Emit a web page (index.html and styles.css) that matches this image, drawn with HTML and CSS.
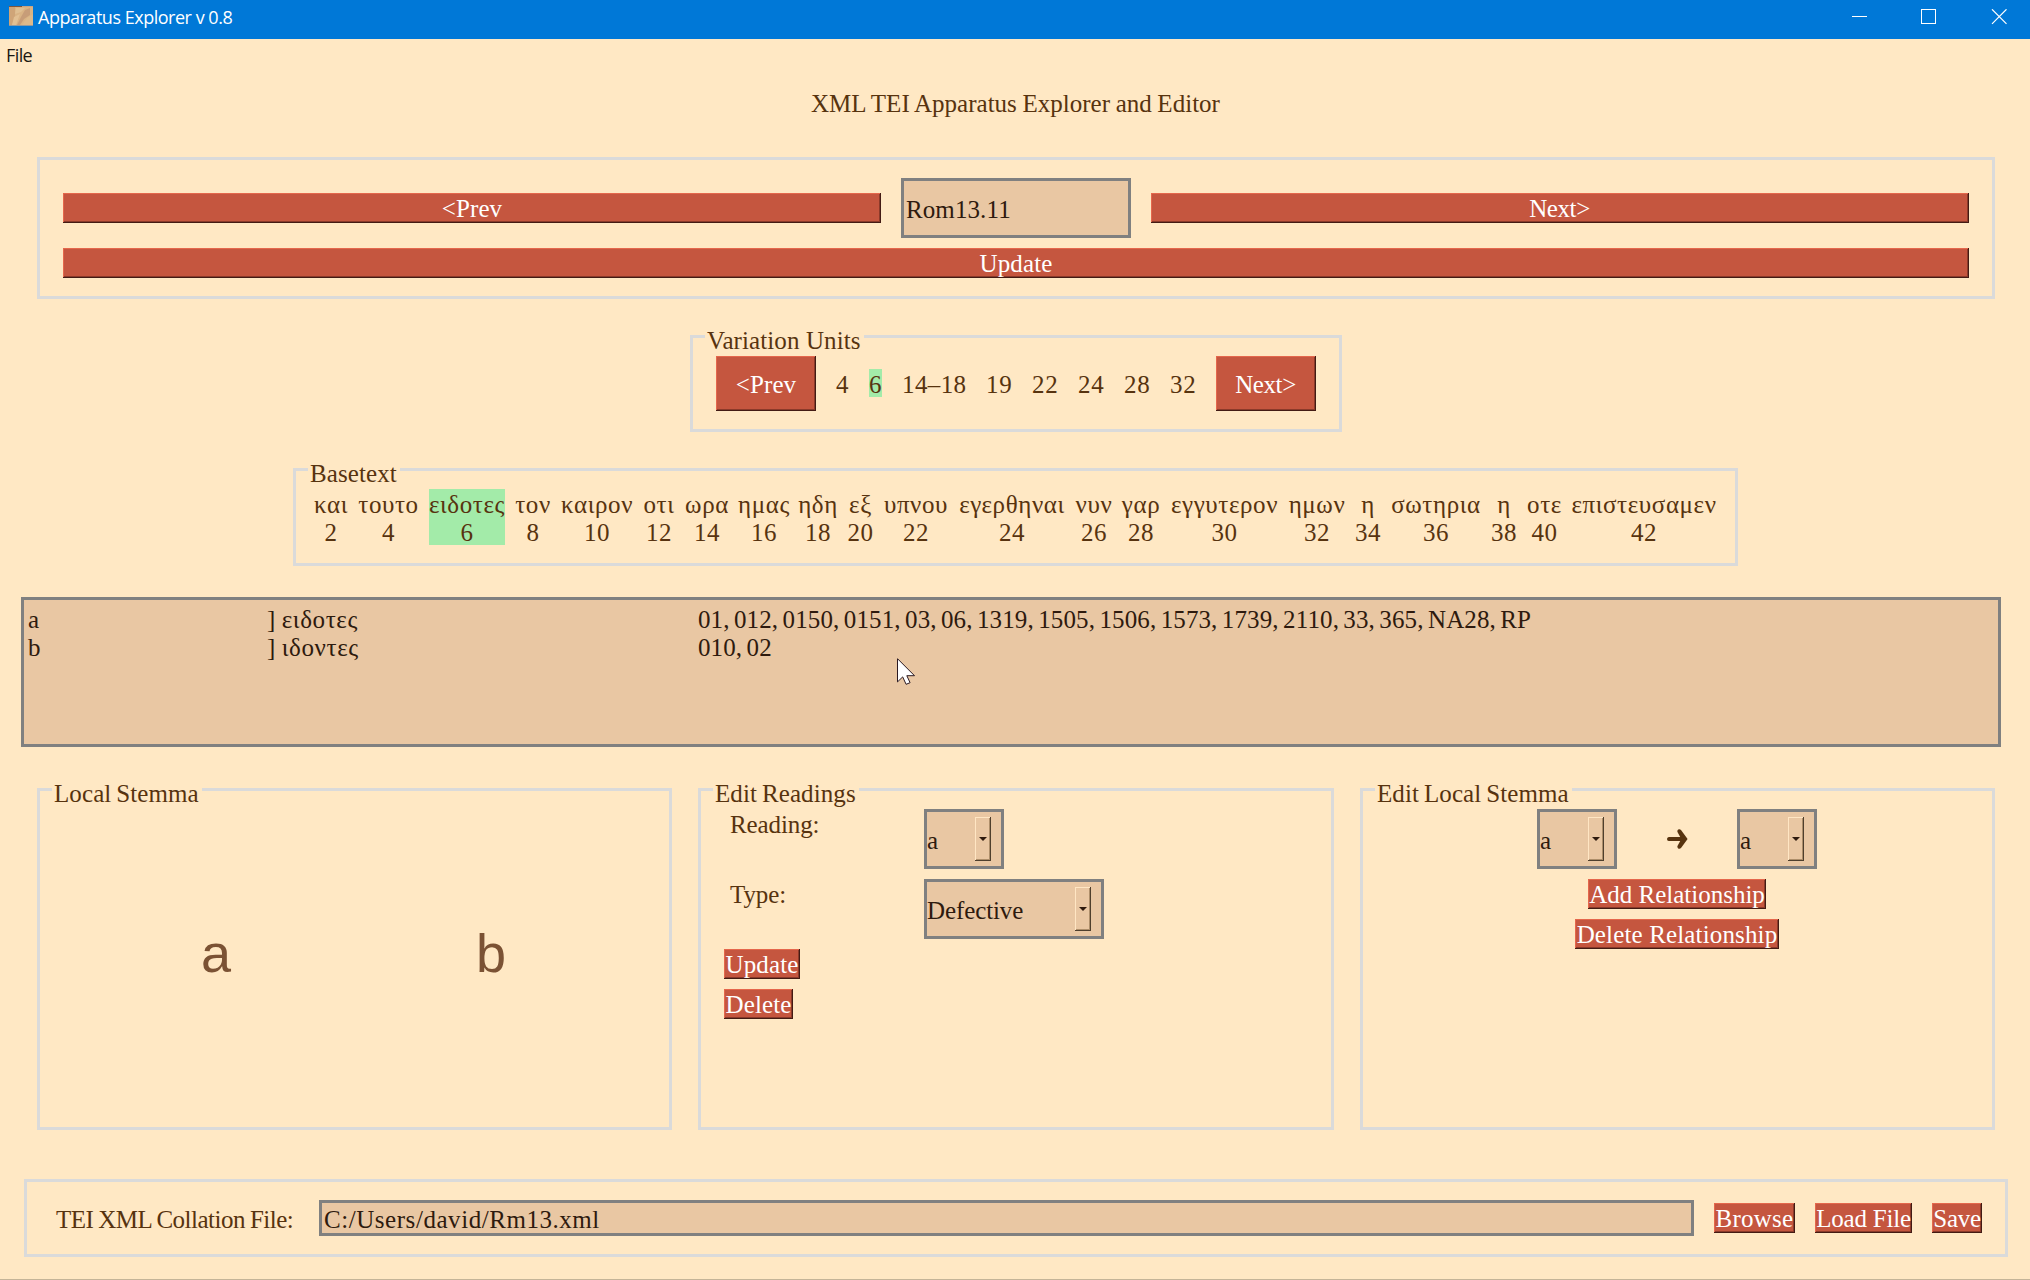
FILE: index.html
```html
<!DOCTYPE html>
<html lang="en">
<head>
<meta charset="utf-8">
<title>Apparatus Explorer v 0.8</title>
<link rel="stylesheet" href="styles.css">
</head>
<body>
<header class="titlebar">
  <svg class="app-icon" width="24" height="20" viewBox="0 0 24 20">
    <rect width="24" height="20" fill="#d9b384"/>
    <path d="M0 0h13v1H0z" fill="#80563c"/><path d="M13 0h11v1H13z" fill="#c9a384"/>
    <path d="M0 1h6v9l-3 9H0z" fill="#cfa578"/>
    <path d="M7 2h9l-4 4-6 2z" fill="#dfbf92"/>
    <path d="M16 4l5-2v7l-6 4-4 6H8l4-8z" fill="#c79d78"/>
    <path d="M5 11l6-3-4 11H3z" fill="#e2c093"/>
    <path d="M18 12l6-4v11H13z" fill="#dcb98b"/>
    <path d="M0 19h24v1H0z" fill="#8f9aa0"/>
  </svg>
  <span class="app-name">Apparatus Explorer v 0.8</span>
  <svg class="window-controls" width="155" height="16" viewBox="0 0 155 16" fill="none" stroke="#fff">
    <path d="M0 7.5h15"/>
    <rect x="69.5" y=".5" width="14" height="14"/>
    <path d="M140 .3l14.5 14.5M154.500 .3L140 14.800" stroke-width="1.2"/>
  </svg>
</header>
<nav class="menubar"><span>File</span></nav>

<main>
  <h1 class="heading">XML TEI Apparatus Explorer and Editor</h1>

  <section class="frame verse-nav">
    <div class="verse-row">
      <button class="btn">&lt;Prev</button>
      <div class="entry verse-entry">Rom13.11</div>
      <button class="btn next">Next&gt;</button>
    </div>
    <button class="btn update">Update</button>
  </section>

  <section class="frame units">
    <h2 class="legend">Variation Units</h2>
    <button class="btn big">&lt;Prev</button>
    <span class="unit one">4</span>
    <span class="unit one active">6</span>
    <span class="unit range">14–18</span>
    <span class="unit">19</span>
    <span class="unit">22</span>
    <span class="unit">24</span>
    <span class="unit">28</span>
    <span class="unit">32</span>
    <button class="btn big next">Next&gt;</button>
  </section>

  <section class="frame basetext">
    <h2 class="legend">Basetext</h2>
    <div class="word"><span>και</span><b>2</b></div>
    <div class="word"><span>τουτο</span><b>4</b></div>
    <div class="word active"><span>ειδοτες</span><b>6</b></div>
    <div class="word"><span>τον</span><b>8</b></div>
    <div class="word"><span>καιρον</span><b>10</b></div>
    <div class="word"><span>οτι</span><b>12</b></div>
    <div class="word"><span>ωρα</span><b>14</b></div>
    <div class="word"><span>ημας</span><b>16</b></div>
    <div class="word"><span>ηδη</span><b>18</b></div>
    <div class="word"><span>εξ</span><b>20</b></div>
    <div class="word"><span>υπνου</span><b>22</b></div>
    <div class="word"><span>εγερθηναι</span><b>24</b></div>
    <div class="word"><span>νυν</span><b>26</b></div>
    <div class="word"><span>γαρ</span><b>28</b></div>
    <div class="word"><span>εγγυτερον</span><b>30</b></div>
    <div class="word"><span>ημων</span><b>32</b></div>
    <div class="word"><span>η</span><b>34</b></div>
    <div class="word"><span>σωτηρια</span><b>36</b></div>
    <div class="word"><span>η</span><b>38</b></div>
    <div class="word"><span>οτε</span><b>40</b></div>
    <div class="word"><span>επιστευσαμεν</span><b>42</b></div>
  </section>

  <section class="apparatus">
    <span>a</span><span class="greek">] ειδοτες</span><span class="witnesses">01, 012, 0150, 0151, 03, 06, 1319, 1505, 1506, 1573, 1739, 2110, 33, 365, NA28, RP</span>
    <span>b</span><span class="greek">] ιδοντες</span><span class="witnesses">010, 02</span>
    <svg class="pointer" width="19" height="28" viewBox="0 0 19 28">
      <path d="M.5.7v23.200l5.200-5 3.400 7.400 4-1.600-3.300-7h7.700z" fill="#fff" stroke="#2b1a22"/>
    </svg>
  </section>

  <div class="panels">
    <section class="frame stemma">
      <h2 class="legend">Local Stemma</h2>
      <span>a</span><span>b</span>
    </section>

    <section class="frame readings">
      <h2 class="legend">Edit Readings</h2>
      <label>Reading:</label>
      <div class="entry combo"><span>a</span><i class="drop"></i></div>
      <label>Type:</label>
      <div class="entry combo wide"><span>Defective</span><i class="drop"></i></div>
      <button class="btn w-update">Update</button>
      <button class="btn w-delete">Delete</button>
    </section>

    <section class="frame edit-stemma">
      <h2 class="legend">Edit Local Stemma</h2>
      <div class="relation">
        <div class="entry combo"><span>a</span><i class="drop"></i></div>
        <svg class="arrow" width="21" height="20" viewBox="0 0 21 20">
          <path d="M1.800 7.900H13.200L10.600 3.200Q9.900 1.600 11.200.6Q12.800-.2 14.200 1.200L20.600 10L14.200 18.800Q12.800 20.200 11.200 19.400Q9.900 18.400 10.600 16.800L13.200 12.100H1.800Q0 11.900 0 10T1.800 7.900z" fill="#57330f"/>
        </svg>
        <div class="entry combo"><span>a</span><i class="drop"></i></div>
      </div>
      <button class="btn w-add">Add Relationship</button>
      <button class="btn w-del-rel">Delete Relationship</button>
    </section>
  </div>

  <section class="frame file-bar">
    <label>TEI XML Collation File:</label>
    <div class="entry path">C:/Users/david/Rm13.xml</div>
    <button class="btn w-browse">Browse</button>
    <button class="btn w-load">Load File</button>
    <button class="btn w-save">Save</button>
  </section>
</main>
</body>
</html>
```
FILE: styles.css
```css
* { box-sizing: border-box; }

body {
  margin: 0;
  width: 2030px;
  height: 1280px;
  overflow: hidden;
  background: #ffe8c4;
  border-bottom: 1px solid #c4b498;
  color: #57330f;
  font: 25px/28px "Liberation Serif", "Times New Roman", serif;
  letter-spacing: .1px;
  white-space: nowrap;
}

/* Window chrome */
.titlebar {
  display: flex;
  height: 39px;
  padding: 6px 22px 0 9px;
  background: #0078d7;
  color: #fff;
  font: 18px/22px "Open Sans", "Noto Sans", sans-serif;
  letter-spacing: -.48px;
}
.app-name { margin-left: 5px; }
.window-controls { margin: 3px 1px 0 auto; }

.menubar {
  height: 33px;
  padding: 4px 6px;
  color: #1b1712;
  font: 18px/25px "Open Sans", "Noto Sans", sans-serif;
  letter-spacing: -.6px;
}

/* Shared widgets */
.frame {
  position: relative;
  border: 3px solid #dadada;
}

.legend {
  position: absolute;
  top: -11px;
  left: 12px;
  margin: 0;
  padding: 0 3px 0 2px;
  background: #ffe8c4;
  font: inherit;
}

.btn {
  display: block;
  height: 30px;
  margin: 0;
  padding: 2px 0 0;
  border: 0;
  background: #c5563f;
  box-shadow: inset -1px -1px #431b14, inset 1px 1px #e5674c, inset -2px -2px #8b3a2a;
  color: #fff;
  font: inherit;
  letter-spacing: inherit;
  text-align: center;
}

.entry {
  border: 3px solid #808080;
  background: #e9c7a3;
  color: #2e1a0e;
}

.heading {
  margin: 18px 0 0;
  padding-left: 1px;
  font: inherit;
  letter-spacing: .02px;
  word-spacing: -.7px;
  text-align: center;
}

/* Verse navigation */
.verse-nav {
  width: 1958px;
  height: 142px;
  margin: 39px 0 0 37px;
  padding: 18px 23px;
}
.verse-row {
  display: grid;
  grid-template-columns: 1fr 230px 1fr;
  align-items: center;
  gap: 20px;
}
.verse-entry { height: 60px; padding: 15px 0 0 2px; }
.update { width: 100%; margin-top: 10px; }
.next { padding-right: 1px; letter-spacing: -.4px; }

/* Variation units */
.units {
  display: flex;
  gap: 20px;
  width: 652px;
  height: 97px;
  margin: 36px 0 0 690px;
  padding: 18px 23px;
}
.btn.big { width: 100px; height: 55px; padding-top: 3px; }
.unit {
  width: 26px;
  height: 28px;
  margin-top: 13px;
  padding-top: 2px;
  letter-spacing: .7px;
}
.unit.one { width: 13px; }
.unit.range { width: 64px; letter-spacing: .4px; }
.active { background: #a3eba9; }

/* Base text */
.basetext {
  display: grid;
  grid-template-columns: 44px 71px 86px 46px 82px 42px 54px 60px 48px 37px 74px 118px 46px 48px 119px 66px 36px 100px 36px 45px 154px;
  width: 1445px;
  height: 98px;
  margin: 36px 0 0 293px;
  padding: 18px 13px;
}
.word {
  display: flex;
  flex-direction: column;
  align-items: center;
  height: 56px;
  margin: 0 5px;
  padding-top: 2px;
  letter-spacing: .6px;
}
.word b { font-weight: 400; }

/* Apparatus list */
.apparatus {
  position: relative;
  display: grid;
  grid-template-columns: 239px 431px 1fr;
  grid-auto-rows: 28px;
  width: 1980px;
  height: 150px;
  margin: 31px 0 0 21px;
  padding: 6px 0 0 4px;
  border: 3px solid #808080;
  background: #e9c7a3;
  color: #2e1a0e;
}
.greek { letter-spacing: .6px; word-spacing: -1px; }
.witnesses { letter-spacing: .12px; word-spacing: -2px; }
.pointer { position: absolute; left: 873px; top: 58px; }

/* Lower panels */
.panels {
  display: grid;
  grid-template-columns: 635px 636px 635px;
  gap: 26px;
  height: 342px;
  margin: 41px 0 0 37px;
}
.panels .legend { word-spacing: -1.5px; }

.stemma {
  display: flex;
  padding: 132px 0 0 161px;
  gap: 245px;
  color: #7b5234;
  font: 54px/60px "Liberation Sans", Arial, sans-serif;
  letter-spacing: 0;
}
.stemma .legend {
  color: #57330f;
  font: 25px/28px "Liberation Serif", "Times New Roman", serif;
  letter-spacing: .1px;
}

.readings {
  display: grid;
  grid-template-columns: 200px 1fr;
  grid-template-rows: 60px 60px 30px 30px;
  gap: 10px 0;
  padding: 18px 23px;
}
.readings label { padding: 2px 0 0 6px; letter-spacing: -.1px; }
.readings .btn { grid-column: 1; }

.combo {
  display: flex;
  justify-content: space-between;
  width: 80px;
  height: 60px;
  padding: 5px 10px 5px 0;
}
.combo span { padding-top: 10px; letter-spacing: -.1px; }
.combo.wide { width: 180px; }
.drop {
  display: flex;
  align-items: center;
  justify-content: center;
  width: 16px;
  height: 44px;
  box-shadow: inset -1px -1px #4f3f2d, inset 1px 1px #ffe6c4, inset -2px -2px #ad8e6a;
}
.drop::before {
  content: "";
  border: 4px solid transparent;
  border-top: 4px solid #2e1a0e;
  border-bottom: 0;
}

.edit-stemma {
  display: flex;
  flex-direction: column;
  align-items: center;
  gap: 10px;
  padding: 18px 1px 0 0;
}
.relation {
  display: flex;
  align-items: center;
  justify-content: space-between;
  width: 280px;
}

.w-update { width: 76px; }
.w-delete { width: 69px; }
.w-add { width: 178px; letter-spacing: 0; }
.w-del-rel { width: 204px; letter-spacing: .15px; }

/* File bar */
.file-bar {
  display: flex;
  align-items: center;
  gap: 20px;
  width: 1984px;
  height: 78px;
  margin: 49px 0 0 24px;
  padding-left: 29px;
}
.file-bar label { width: 243px; padding-top: 3px; letter-spacing: -.5px; word-spacing: -.8px; }
.path { width: 1375px; height: 36px; padding: 3px 0 0 2px; letter-spacing: .55px; }
.w-browse { width: 81px; letter-spacing: .25px; }
.w-load { width: 97px; letter-spacing: -.2px; }
.w-save { width: 50px; letter-spacing: -.3px; }
```
